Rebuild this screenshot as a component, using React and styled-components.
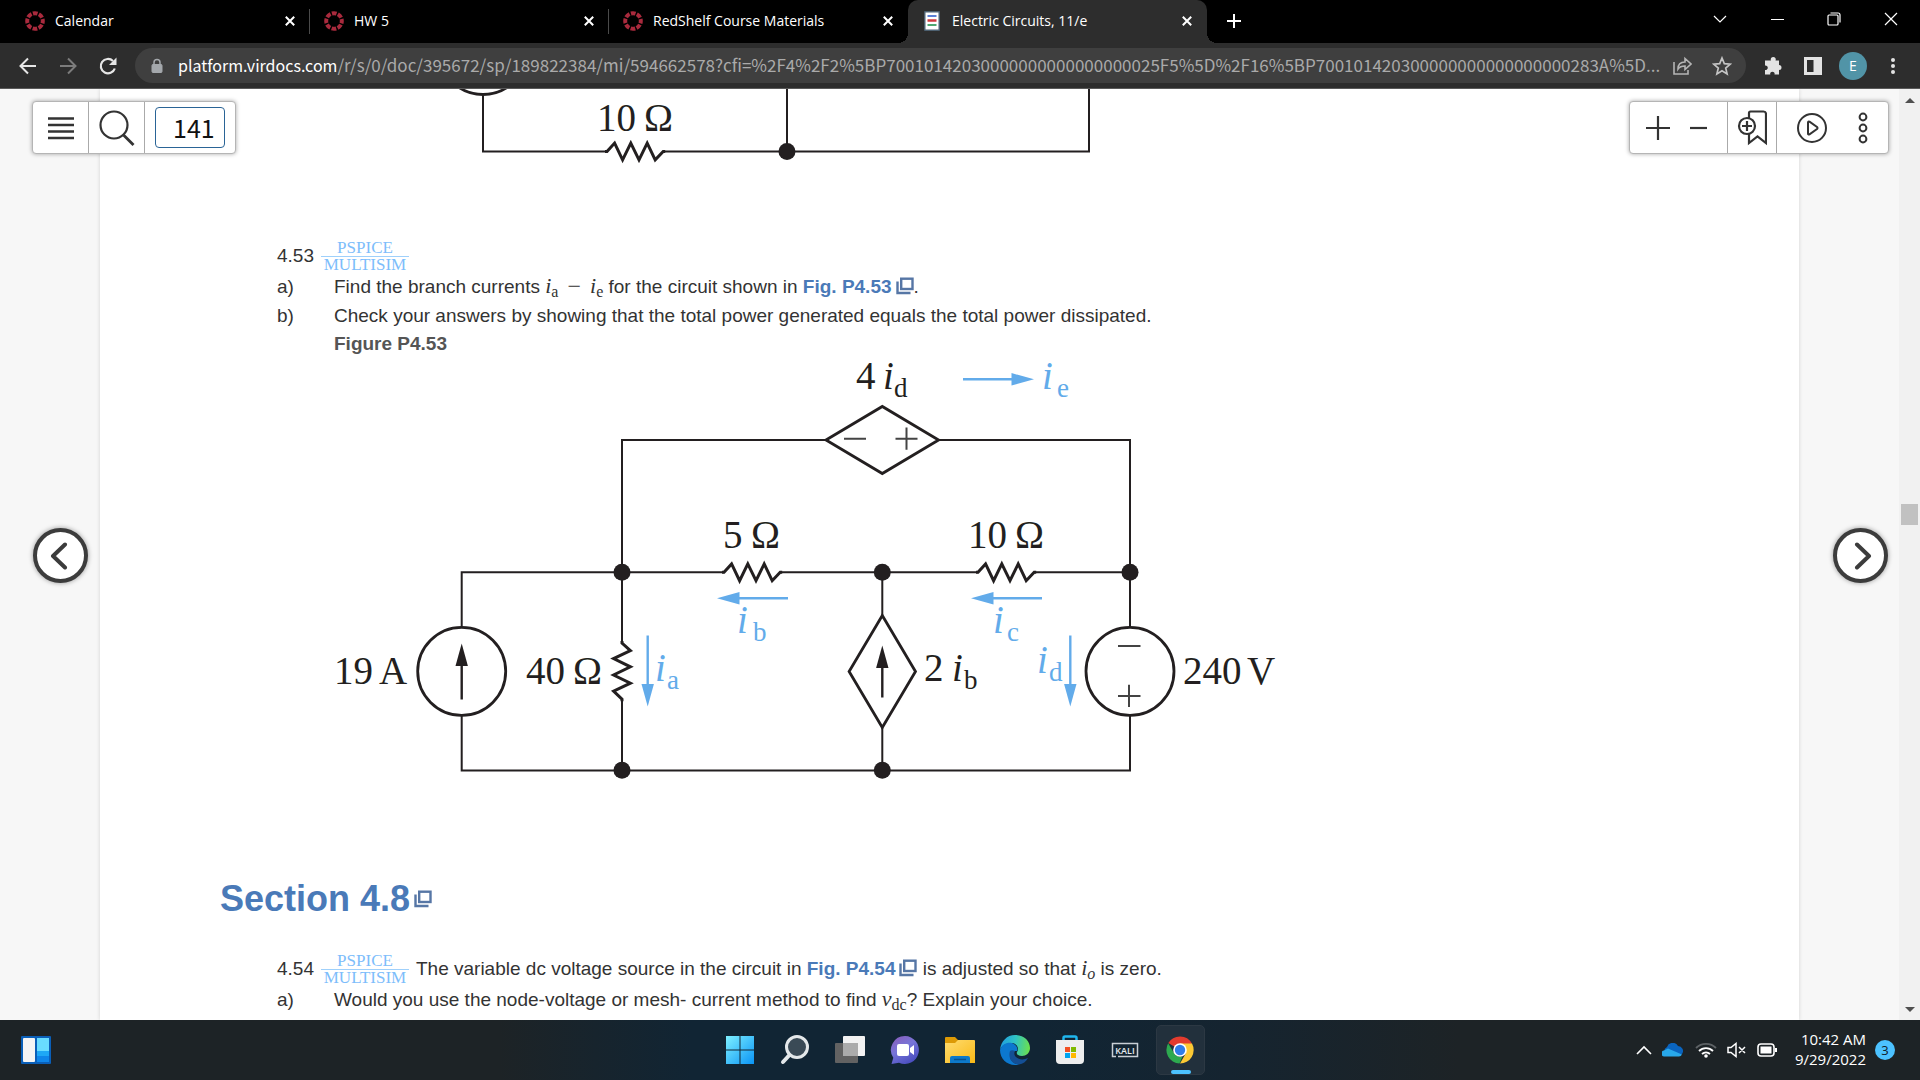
import React from "react";
import styled, { createGlobalStyle, css } from "styled-components";

const uiFont = '"Open Sans", "Noto Sans", sans-serif';
const INK = "#231f20";
const SKY = "#62abea";

const GlobalStyle = createGlobalStyle`
  *, *::before, *::after { box-sizing: border-box; }
  html, body, #root { height: 100%; }
  body { margin: 0; overflow: hidden; font-family: ${uiFont}; }
  button, input { font: inherit; color: inherit; margin: 0; }
  svg { display: block; flex: none; }
`;

const Window = styled.div`
  display: flex;
  flex-direction: column;
  height: 100vh;
  background: #000;
`;

const PlainButton = styled.button`
  display: flex;
  align-items: center;
  justify-content: center;
  padding: 0;
  border: 0;
  background: none;
`;

/* ---------- tab strip ---------- */

const TabStrip = styled.header`
  display: flex;
  flex: none;
  height: 43px;
  padding: 0 1px 0 11px;
  color: #fff;
`;

const Tab = styled.div`
  position: relative;
  display: flex;
  align-items: center;
  width: 299px;
  padding: 0 10px 2px 14px;
  ${(p) =>
    p.$divided &&
    css`
      &::after {
        content: "";
        position: absolute;
        right: 0;
        top: 9px;
        width: 1px;
        height: 25px;
        background: #4a4a4a;
      }
    `}
  ${(p) =>
    p.$active &&
    css`
      background: #2d2d2d;
      border-radius: 10px 10px 0 0;
      &::before,
      &::after {
        content: "";
        position: absolute;
        bottom: 0;
        width: 10px;
        height: 10px;
      }
      &::before {
        left: -10px;
        background: radial-gradient(circle at 0 0, #000 10px, #2d2d2d 10px);
      }
      &::after {
        right: -10px;
        background: radial-gradient(circle at 100% 0, #000 10px, #2d2d2d 10px);
      }
    `}
`;

const TabTitle = styled.button`
  display: flex;
  flex: 1;
  align-items: center;
  gap: 10px;
  padding: 0;
  border: 0;
  background: none;
  font-size: 14px;
  line-height: 20px;
  text-align: left;
`;

const TabClose = styled(PlainButton)`
  width: 20px;
  height: 20px;
`;

const NewTab = styled(PlainButton)`
  width: 36px;
  margin-left: 9px;
  padding-bottom: 2px;
`;

const WindowControls = styled.div`
  display: flex;
  height: 37px;
  margin-left: auto;
`;

const WindowButton = styled(PlainButton)`
  width: 57px;
`;

/* ---------- address row ---------- */

const AddressRow = styled.div`
  display: flex;
  flex: none;
  align-items: center;
  height: 46px;
  padding: 0 7px 0 8px;
  background: #2d2d2d;
  border-bottom: 1px solid #5a5a5a;
`;

const ToolButton = styled(PlainButton)`
  width: 40px;
  height: 36px;
`;

const AddressBar = styled.form`
  display: flex;
  flex: 1;
  align-items: center;
  height: 35px;
  margin: 0 7px;
  padding: 0 4px 0 14px;
  border-radius: 18px;
  background: #3f3f3f;
  font-family: "Noto Sans CJK JP", "Noto Sans", sans-serif;
  font-size: 17px;
  line-height: 24px;
`;

const Host = styled.label`
  margin-left: 13px;
  padding-bottom: 2px;
  color: #fff;
  font-size: 16px;
`;

const PathInput = styled.input`
  flex: 1;
  min-width: 0;
  height: 26px;
  padding: 0 0 2px;
  border: 0;
  outline: 0;
  background: none;
  color: #aaa;
`;

const Avatar = styled.span`
  width: 28px;
  height: 28px;
  border-radius: 50%;
  background: #5194a7;
  color: #fff;
  font-size: 14px;
  line-height: 28px;
  text-align: center;
`;

/* ---------- reader ---------- */

const Reader = styled.main`
  position: relative;
  display: flex;
  flex: 1;
  min-height: 0;
  overflow: hidden;
  background: #f7f7f7;
`;

const Page = styled.article`
  flex: 1;
  margin: 0 100px;
  padding-left: 120px;
  background: #fff;
  box-shadow: 0 0 4px rgba(0, 0, 0, 0.15);
  color: #333;
  font-family: "Liberation Sans", Arial, sans-serif;
  font-size: 19px;
  line-height: 27px;
  white-space: nowrap;
`;

const Figure = styled.figure`
  margin: 0 0 0 114px;
  svg {
    overflow: visible;
  }
`;

const Problem = styled.section`
  padding-left: 57px;
  padding-top: ${(p) => (p.$first ? 74 : 32)}px;
`;

const ProblemHead = styled.div`
  display: flex;
  align-items: center;
  gap: 7px;
  height: 34px;
  padding-bottom: 2px;
`;

const Parts = styled.ol`
  margin: 0;
  padding: 0;
  list-style: none;
`;

const Part = styled.li`
  display: flex;
  height: 29px;
`;

const Marker = styled.span`
  width: 57px;
`;

const Caption = styled.h4`
  margin: 0 0 0 57px;
  padding-bottom: 4px;
  color: #555;
  font-size: 19px;
  line-height: 25px;
`;

const SectionTitle = styled.h2`
  display: flex;
  align-items: center;
  gap: 4px;
  margin: 94px 0 0;
  color: #4a7ab8;
  font-size: 36px;
  line-height: 42px;
`;

const Fraction = styled.span`
  display: flex;
  flex-direction: column;
  width: 88px;
  margin-top: 2px;
  color: #7dbdfb;
  font-family: "Liberation Serif", "Times New Roman", serif;
  font-size: 17px;
  line-height: 17px;
  text-align: center;
`;

const Denominator = styled.span`
  border-top: 1px solid #9fd0fb;
  line-height: 16px;
`;

const Variable = styled.i`
  font-family: "Liberation Serif", "Times New Roman", serif;
  font-size: 22px;
  line-height: 20px;
`;

const Operator = styled.span`
  margin: 0 9px;
  font-family: "Liberation Serif", "Times New Roman", serif;
  font-size: 24px;
  line-height: 20px;
  vertical-align: -1px;
`;

const Sub = styled.sub`
  font-family: "Liberation Serif", "Times New Roman", serif;
  font-size: 16px;
  font-style: ${(p) => (p.$italic ? "italic" : "normal")};
  line-height: 0;
  vertical-align: -4px;
`;

const RefLink = styled.a`
  color: #4a7ab8;
  font-weight: bold;
  text-decoration: none;
  svg {
    display: inline-block;
    margin-left: 4px;
    vertical-align: -2px;
  }
`;

const Panel = styled.div`
  position: absolute;
  top: 12px;
  ${(p) => (p.$side === "left" ? "left: 32px;" : "right: 31px; padding-right: 9px;")}
  display: flex;
  height: 53px;
  border: 1px solid #b5b5b5;
  border-radius: 4px;
  background: #fff;
  box-shadow: 0 0 4px rgba(0, 0, 0, 0.35);
`;

const PanelButton = styled(PlainButton)`
  width: ${(p) => p.$width}px;
  border-right: ${(p) => (p.$ruled ? "1px solid #aaa" : "0")};
`;

const PageNumber = styled.input`
  width: 70px;
  height: 41px;
  margin: 5px 10px;
  padding: 0 0 2px 17px;
  border: 1px solid #2a6496;
  border-radius: 4px;
  background: #fff;
  color: #111;
  font-family: "Noto Sans CJK JP", "Noto Sans", sans-serif;
  font-size: 25px;
`;

const PageTurn = styled(PlainButton)`
  position: absolute;
  top: 439px;
  ${(p) => (p.$side === "left" ? "left: 33px;" : "right: 32px;")}
  width: 55px;
  height: 55px;
  border: 4px solid #3c3c3c;
  border-radius: 50%;
  background: #fff;
  box-shadow: 0 0 5px rgba(0, 0, 0, 0.4);
`;

const ScrollBar = styled.div`
  display: flex;
  flex: none;
  flex-direction: column;
  align-items: center;
  width: 21px;
  padding: 9px 0 8px;
  background: #f1f1f1;
`;

const ScrollThumb = styled.div`
  width: 17px;
  height: 21px;
  margin: 401px 0 auto;
  background: #c1c1c1;
`;

/* ---------- taskbar ---------- */

const Taskbar = styled.footer`
  display: grid;
  grid-template-columns: 1fr auto 1fr;
  flex: none;
  align-items: center;
  height: 60px;
  background: linear-gradient(90deg, #1d2326 0%, #1d2326 26%, #112534 36%, #112534 54%, #152430 64%, #1d2326 76%);
  color: #fff;
`;

const Widgets = styled(PlainButton)`
  width: 30px;
  margin-left: 21px;
`;

const Apps = styled.nav`
  display: flex;
`;

const AppButton = styled(PlainButton)`
  position: relative;
  width: 55px;
  height: 50px;
  ${(p) =>
    p.$running &&
    css`
      &::before {
        content: "";
        position: absolute;
        inset: 0 3px;
        border: 1px solid #2c3843;
        border-radius: 5px;
        background: #22303c;
      }
      &::after {
        content: "";
        position: absolute;
        left: 18px;
        bottom: 1px;
        width: 20px;
        height: 4px;
        border-radius: 2px;
        background: #4cc2ff;
      }
      svg {
        position: relative;
      }
    `}
`;

const Tray = styled.div`
  display: flex;
  align-items: center;
  justify-content: flex-end;
  padding-right: 25px;
`;

const TrayIcons = styled.div`
  display: flex;
  align-items: center;
  gap: 10px;
  margin-right: 17px;
`;

const Clock = styled.time`
  padding-bottom: 2px;
  font-size: 15px;
  line-height: 20px;
  text-align: right;
`;

const Badge = styled.span`
  width: 20px;
  height: 20px;
  margin-left: 9px;
  border-radius: 50%;
  background: #4cc2ff;
  color: #10202a;
  font-size: 13px;
  line-height: 20px;
  text-align: center;
`;

/* ---------- icons ---------- */

const Icon = ({ size = 20, w, h, box, color = "currentColor", weight = 2, children, fill = "none" }) => (
  <svg
    width={w || size}
    height={h || size}
    viewBox={box || `0 0 ${w || size} ${h || size}`}
    fill={fill}
    stroke={color}
    strokeWidth={weight}
    aria-hidden="true"
  >
    {children}
  </svg>
);

const CourseIcon = () => (
  <Icon size={20} color="#a92a3d" weight={4}>
    <circle cx="10" cy="10" r="7.8" strokeDasharray="4.7 1.426" strokeDashoffset="2.35" />
  </Icon>
);

const BookIcon = () => (
  <Icon size={20} color="none">
    <rect x="2" y="0" width="16" height="20" rx="1" fill="#4d6070" />
    <rect x="3.500" y="1.500" width="13" height="17" fill="#fff" />
    <path d="M5.500 5h9" stroke="#5c80d6" strokeWidth="2" />
    <path d="M5.500 9.500h9" stroke="#d0393e" strokeWidth="2.500" />
    <path d="M5.500 14h9" stroke="#4fa871" strokeWidth="2" />
  </Icon>
);

const CloseIcon = () => (
  <Icon size={12}>
    <path d="M1.800 1.800l8.400 8.400M10.200 1.800l-8.400 8.400" />
  </Icon>
);

const PopoutIcon = () => (
  <Icon size={18} color="#5676a5" weight={2.4}>
    <rect x="5.200" y="1.700" width="11.300" height="10.300" />
    <path d="M1.500 4.500V16h13" />
  </Icon>
);

const Cap = ({ down }) => (
  <svg width="14" height="5" viewBox="0 0 14 5" aria-hidden="true">
    <path d={down ? "M2 0h10L7 5z" : "M2 5h10L7 0z"} fill="#505050" />
  </svg>
);

/* ---------- circuit drawing ---------- */

const Big = styled.text`
  font-family: "Liberation Serif", "Times New Roman", serif;
  font-size: 39px;
  font-style: ${(p) => (p.$italic ? "italic" : "normal")};
  fill: ${(p) => (p.$sky ? SKY : INK)};
`;

const Small = styled.text`
  font-family: "Liberation Serif", "Times New Roman", serif;
  font-size: 27px;
  fill: ${(p) => (p.$sky ? SKY : INK)};
`;

const Node = ({ x, y }) => <circle cx={x} cy={y} r="8.500" fill={INK} />;

const Resistor = ({ x, y, turn = 0 }) => (
  <path
    transform={`translate(${x} ${y}) rotate(${turn})`}
    d="M0 0h2l7.600-8.400 8 16.800 8.200-16.800 8.200 16.800 8.200-16.800 8 16.800 8-8.400h2"
    fill="none"
    stroke={INK}
    strokeWidth="3"
  />
);

const Arrow = ({ x, y, turn = 0, color = SKY, length = 71 }) => (
  <g transform={`translate(${x} ${y}) rotate(${turn})`}>
    <path d={`M0 0H${length - 20}`} stroke={color} strokeWidth="2.400" />
    <path d={`M${length} 0l-22.500-6.200v12.400z`} fill={color} />
  </g>
);

const UpperCircuit = () => (
  <svg width="800" height="76" viewBox="334 89 800 76" role="img" aria-label="Circuit with a 10 ohm resistor">
    <g fill="none" stroke={INK} strokeWidth="2">
      <circle cx="483" cy="50.500" r="44" strokeWidth="2.800" />
      <path d="M483 95v56.500h124M664 151.500h425V89M787 89v62" />
    </g>
    <Resistor x={605} y={151.5} />
    <Node x={787} y={151.5} />
    <Big x="597" y="131">10</Big>
    <Big x="644" y="131">Ω</Big>
  </svg>
);

const MainCircuit = () => (
  <svg width="960" height="424" viewBox="334 360 960 424" role="img" aria-label="Figure P4.53 circuit">
    <g fill="none" stroke={INK} strokeWidth="2">
      <path d="M826 440H622v203M939 440h191v187M461.700 627v-54.700H724M780 572.300h198M1034 572.300h96M622 699v71.500M461.700 716v54.500H1130V716M882.300 572.300V615M882.300 728v42.500" />
      <path d="M844 438.700h22M895.500 438.700h22M906.500 427.500v22.200M1118 646h22.500M1118 696h22.500M1129 684.700V707" stroke="#444" />
      <g strokeWidth="2.800">
        <path d="M826 440l56.300-33.500L938.600 440l-56.300 33.500z" />
        <path d="M882.300 615.500l33.200 56-33.200 56-33.200-56z" />
        <circle cx="461.700" cy="671.300" r="44" />
        <circle cx="1130" cy="671.300" r="44" />
      </g>
    </g>
    <Resistor x={722} y={572.3} />
    <Resistor x={976} y={572.3} />
    <Resistor x={622} y={641} turn={90} />
    <Node x={622} y={572.3} />
    <Node x={882.3} y={572.3} />
    <Node x={1130} y={572.3} />
    <Node x={622} y={770.3} />
    <Node x={882.3} y={770.3} />
    <Arrow x={461.7} y={699.5} turn={-90} color={INK} length={56} />
    <Arrow x={882.3} y={697.5} turn={-90} color={INK} length={52} />
    <Arrow x={963} y={379.3} />
    <Arrow x={788} y={598.3} turn={180} />
    <Arrow x={1042} y={598.3} turn={180} />
    <Arrow x={647.7} y={635.5} turn={90} />
    <Arrow x={1070.3} y={635.5} turn={90} />
    <Big x="856" y="388.500">4</Big>
    <Big $italic x="883" y="388.500">i</Big>
    <Small x="894" y="396.500">d</Small>
    <Big $italic $sky x="1042" y="388.500">i</Big>
    <Small $sky x="1057" y="396.500">e</Small>
    <Big x="723" y="547.700">5</Big>
    <Big x="751" y="547.700">Ω</Big>
    <Big x="968" y="547.700">10</Big>
    <Big x="1015" y="547.700">Ω</Big>
    <Big $italic $sky x="737" y="632.700">i</Big>
    <Small $sky x="753" y="640.500">b</Small>
    <Big $italic $sky x="993" y="632.700">i</Big>
    <Small $sky x="1007" y="640.500">c</Small>
    <Big x="334" y="684">19</Big>
    <Big x="379" y="684">A</Big>
    <Big x="526" y="684">40</Big>
    <Big x="573" y="684">Ω</Big>
    <Big $italic $sky x="655" y="680.700">i</Big>
    <Small $sky x="667" y="688.500">a</Small>
    <Big x="924" y="680.700">2</Big>
    <Big $italic x="952" y="680.700">i</Big>
    <Small x="964" y="688.500">b</Small>
    <Big $italic $sky x="1037" y="672.500">i</Big>
    <Small $sky x="1049" y="680.500">d</Small>
    <Big x="1183" y="684">240</Big>
    <Big x="1247" y="684">V</Big>
  </svg>
);

const tabs = [
  { title: "Calendar", icon: <CourseIcon />, divided: true },
  { title: "HW 5", icon: <CourseIcon />, divided: true },
  { title: "RedShelf Course Materials", icon: <CourseIcon /> },
  { title: "Electric Circuits, 11/e", icon: <BookIcon />, active: true },
];

const PspiceMultisim = () => (
  <Fraction>
    <span>PSPICE</span>
    <Denominator>MULTISIM</Denominator>
  </Fraction>
);

const apps = [
  {
    name: "Start",
    icon: (
      <Icon size={30} color="none">
        <defs>
          <linearGradient id="win" x1="0" y1="0" x2="1" y2="1">
            <stop offset="0" stopColor="#7ef0ff" />
            <stop offset="1" stopColor="#0a94f5" />
          </linearGradient>
        </defs>
        <path d="M1 1h13.500v13.500H1zM15.500 1H29v13.500H15.500zM1 15.500h13.500V29H1zM15.500 15.500H29V29H15.500z" fill="url(#win)" />
      </Icon>
    ),
  },
  {
    name: "Search",
    icon: (
      <Icon size={30} color="#e4e8ea" weight={3}>
        <circle cx="17" cy="12" r="10.500" fill="#3a4a56" />
        <path d="M9.500 20l-6.500 7" strokeWidth="4" strokeLinecap="round" />
      </Icon>
    ),
  },
  {
    name: "Task view",
    icon: (
      <Icon size={32} color="none">
        <rect x="9" y="2" width="22" height="20" rx="1" fill="#f2f2f2" />
        <rect x="1" y="9" width="23" height="20" rx="1" fill="#626262" />
        <rect x="9" y="9" width="15" height="13" fill="#ababab" />
      </Icon>
    ),
  },
  {
    name: "Chat",
    icon: (
      <Icon size={30} color="none">
        <defs>
          <linearGradient id="chat" x1="0" y1="0" x2="0.600" y2="1">
            <stop offset="0" stopColor="#8d5ab8" />
            <stop offset="0.500" stopColor="#7775d8" />
            <stop offset="1" stopColor="#4b4fc0" />
          </linearGradient>
        </defs>
        <path d="M15 1a14 14 0 1 1-6 26.700L1.500 29l1.800-6.200A14 14 0 0 1 15 1z" fill="url(#chat)" />
        <rect x="7" y="9" width="12" height="12" rx="2" fill="#fff" />
        <path d="M20 13l4-3v10l-4-3z" fill="#fff" />
      </Icon>
    ),
  },
  {
    name: "File Explorer",
    icon: (
      <Icon w={30} h={28} color="none">
        <defs>
          <linearGradient id="folder" x1="0" y1="0" x2="1" y2="1">
            <stop offset="0" stopColor="#ffdc70" />
            <stop offset="1" stopColor="#f9b916" />
          </linearGradient>
        </defs>
        <path d="M0 2q0-1 1-1h9l3 3h8v8H0z" fill="#dd9a05" />
        <path d="M0 7h10l3-3h16q1 0 1 1v22H0z" fill="url(#folder)" />
        <path d="M5 27v-5q0-2 2-2h16q2 0 2 2v5z" fill="#0d79ca" />
        <path d="M9 23.500h12" stroke="#08508f" strokeWidth="1.500" />
      </Icon>
    ),
  },
  {
    name: "Edge",
    icon: (
      <Icon size={30} color="none">
        <defs>
          <linearGradient id="edgeTop" x1="0" y1="0.300" x2="1" y2="0.400">
            <stop offset="0" stopColor="#1f9de2" />
            <stop offset="0.500" stopColor="#2fc3c4" />
            <stop offset="1" stopColor="#6be04f" />
          </linearGradient>
        </defs>
        <path d="M0 15C1 6 7 0 15 0c9 0 15 6 15 13 0 5-4 8-8 8-4 0-6-2-5-4 2-3 1-8-5-9C6 8 2 10 0 15z" fill="url(#edgeTop)" />
        <path d="M0 15C2 8 10 6 14 9c3 2 4 5 3 7-7-1-9 7-4 11 2 2 4 2 6 2.400C9 32 0 25 0 15z" fill="#0c78cf" />
        <path d="M10 16c-2 6 1 13 9 13.500 4-.5 7-3 9-6.500-4 2-9 2-12-1-2-2-2-4-1-6-2-1-4-1-5 0z" fill="#144f94" />
      </Icon>
    ),
  },
  {
    name: "Microsoft Store",
    icon: (
      <Icon size={30} color="none">
        <path d="M8.500 6V3q0-1.500 1.500-1.500h10q1.500 0 1.500 1.500v3" fill="none" stroke="#1fb6ee" strokeWidth="2.500" />
        <path d="M1 5h28v20q0 4-4 4H5q-4 0-4-4z" fill="#eeeeee" />
        <path d="M10 12h5v5h-5z" fill="#f25022" />
        <path d="M16 12h5v5h-5z" fill="#7fba00" />
        <path d="M10 18h5v5h-5z" fill="#00a4ef" />
        <path d="M16 18h5v5h-5z" fill="#ffb900" />
      </Icon>
    ),
  },
  {
    name: "Kali",
    icon: (
      <Icon w={28} h={16} weight={1.5} color="#c9d0d6">
        <path d="M5 14.500H1.500v-13h25v13H7" />
        <text x="14" y="12" textAnchor="middle" fontSize="9" fontWeight="600" fontFamily="Open Sans" fill="#e8ecef" stroke="none">
          KALI
        </text>
      </Icon>
    ),
  },
  {
    name: "Chrome",
    running: true,
    icon: (
      <Icon size={28} color="none">
        <path d="M14 14L2.300 7A13.600 13.600 0 0 1 25.900 7.500z" fill="#e33b2e" />
        <path d="M14 7.500h12A13.600 13.600 0 0 1 14 27.600L20 17z" fill="#fcc934" />
        <path d="M2.200 7.200L8.500 18q3 4 8 2.500L13.500 27.600A13.600 13.600 0 0 1 2.200 7.200z" fill="#2da94f" />
        <circle cx="14" cy="14" r="6.800" fill="#fff" />
        <circle cx="14" cy="14" r="5.200" fill="#2f7de9" />
      </Icon>
    ),
  },
];

const addressPath =
  "/r/s/0/doc/395672/sp/189822384/mi/594662578?cfi=%2F4%2F2%5BP700101420300000000000000000" +
  "25F5%5D%2F16%5BP700101420300000000000000000" +
  "283A%5D...";

export default function App() {
  return (
    <Window>
      <GlobalStyle />
      <TabStrip>
        {tabs.map((tab) => (
          <Tab key={tab.title} $active={tab.active} $divided={tab.divided}>
            <TabTitle type="button">
              {tab.icon}
              {tab.title}
            </TabTitle>
            <TabClose type="button" aria-label={`Close ${tab.title}`}>
              <CloseIcon />
            </TabClose>
          </Tab>
        ))}
        <NewTab type="button" aria-label="New tab">
          <Icon size={16}>
            <path d="M8 1v14M1 8h14" />
          </Icon>
        </NewTab>
        <WindowControls>
          <WindowButton type="button" aria-label="Search tabs">
            <Icon w={14} h={8} weight={1.2}>
              <path d="M1 1l6 6 6-6" />
            </Icon>
          </WindowButton>
          <WindowButton type="button" aria-label="Minimize">
            <Icon size={14} weight={1}>
              <path d="M1 7.500h13" />
            </Icon>
          </WindowButton>
          <WindowButton type="button" aria-label="Restore">
            <Icon size={14} weight={1.2}>
              <rect x="1" y="3" width="10" height="10" rx="1" />
              <path d="M3.500 1H11q2 0 2 2v7.500" />
            </Icon>
          </WindowButton>
          <WindowButton type="button" aria-label="Close window">
            <Icon size={14} weight={1.2}>
              <path d="M1 1l12 12M13 1L1 13" />
            </Icon>
          </WindowButton>
        </WindowControls>
      </TabStrip>

      <AddressRow>
        <ToolButton type="button" aria-label="Back">
          <Icon color="#e6e6e6">
            <path d="M18 10H3M10 2.500L2.500 10l7.500 7.500" />
          </Icon>
        </ToolButton>
        <ToolButton type="button" aria-label="Forward">
          <Icon color="#7c7c7c">
            <path d="M2 10h15M10 2.500l7.500 7.500-7.500 7.500" />
          </Icon>
        </ToolButton>
        <ToolButton type="button" aria-label="Reload">
          <Icon color="#e6e6e6" weight={2.2}>
            <path d="M16.800 12.500A7.200 7.200 0 1 1 15 5" />
            <path d="M18.500 1.500v7.500H11z" fill="#e6e6e6" stroke="none" />
          </Icon>
        </ToolButton>
        <AddressBar onSubmit={(e) => e.preventDefault()}>
          <Icon w={16} h={16} color="#a4a8ac">
            <rect x="3" y="6.500" width="10" height="8" rx="1" fill="#a4a8ac" strokeWidth="1" />
            <path d="M5 7V4.500a3 3 0 0 1 6 0V7" strokeWidth="1.500" />
          </Icon>
          <Host htmlFor="address">platform.virdocs.com</Host>
          <PathInput id="address" readOnly value={addressPath} />
          <ToolButton type="button" aria-label="Share">
            <Icon color="#b5b5b5" weight={1.6}>
              <path d="M2 6v12h14v-4M6 13c0-5 3-7 7-7V2.500l6 5.500-6 5.500V10c-3 0-5 0-7 3z" />
            </Icon>
          </ToolButton>
          <ToolButton type="button" aria-label="Bookmark this tab">
            <Icon color="#c4c4c4" weight={1.7}>
              <path d="M10 2l2.300 5.600 6 .5-4.600 3.900 1.400 5.900L10 14.700l-5.100 3.200L6.300 12 1.700 8.100l6-.5z" />
            </Icon>
          </ToolButton>
        </AddressBar>
        <ToolButton type="button" aria-label="Extensions">
          <Icon color="none">
            <path d="M4 4.500h4a2.500 2.500 0 1 1 4.500 0H16V9a2.500 2.500 0 1 1 0 5v4.500h-4.500a2.200 2.200 0 1 0-4.200 0H2V14a2.300 2.300 0 1 0 0-4.500V4.500z" fill="#e3e3e3" />
          </Icon>
        </ToolButton>
        <ToolButton type="button" aria-label="Side panel">
          <Icon color="#e3e3e3" weight={3}>
            <rect x="2.500" y="2.500" width="15" height="15" />
            <path d="M14 2v16" strokeWidth="7" />
          </Icon>
        </ToolButton>
        <ToolButton type="button" aria-label="Profile">
          <Avatar>E</Avatar>
        </ToolButton>
        <ToolButton type="button" aria-label="Menu">
          <Icon color="none" fill="#e3e3e3">
            <circle cx="10" cy="4" r="2" />
            <circle cx="10" cy="10" r="2" />
            <circle cx="10" cy="16" r="2" />
          </Icon>
        </ToolButton>
      </AddressRow>

      <Reader>
        <Page>
          <Figure>
            <UpperCircuit />
          </Figure>
          <Problem $first>
            <ProblemHead>
              <span>4.53</span>
              <PspiceMultisim />
            </ProblemHead>
            <Parts>
              <Part>
                <Marker>a)</Marker>
                <span>
                  Find the branch currents <Variable>i</Variable>
                  <Sub>a</Sub>
                  <Operator>−</Operator>
                  <Variable>i</Variable>
                  <Sub>e</Sub> for the circuit shown in{" "}
                  <RefLink href="#fig-p4-53">
                    Fig. P4.53
                    <PopoutIcon />
                  </RefLink>
                  .
                </span>
              </Part>
              <Part>
                <Marker>b)</Marker>
                <span>Check your answers by showing that the total power generated equals the total power dissipated.</span>
              </Part>
            </Parts>
            <Caption>Figure P4.53</Caption>
          </Problem>
          <Figure id="fig-p4-53">
            <MainCircuit />
          </Figure>
          <SectionTitle>
            Section 4.8
            <PopoutIcon />
          </SectionTitle>
          <Problem>
            <ProblemHead>
              <span>4.54</span>
              <PspiceMultisim />
              <span>
                The variable dc voltage source in the circuit in{" "}
                <RefLink href="#fig-p4-54">
                  Fig. P4.54
                  <PopoutIcon />
                </RefLink>{" "}
                is adjusted so that <Variable>i</Variable>
                <Sub $italic>o</Sub> is zero.
              </span>
            </ProblemHead>
            <Parts>
              <Part>
                <Marker>a)</Marker>
                <span>
                  Would you use the node-voltage or mesh- current method to find <Variable>v</Variable>
                  <Sub>dc</Sub>? Explain your choice.
                </span>
              </Part>
            </Parts>
          </Problem>
        </Page>
        <ScrollBar>
          <Cap />
          <ScrollThumb />
          <Cap down />
        </ScrollBar>

        <Panel $side="left">
          <PanelButton type="button" $width={56} $ruled aria-label="Contents">
            <Icon w={26} h={24} color="#333" weight={2.4}>
              <path d="M0 2.500h26M0 9h26M0 15.500h26M0 22h26" />
            </Icon>
          </PanelButton>
          <PanelButton type="button" $width={56} $ruled aria-label="Search book">
            <Icon size={36} color="#333" weight={2.2}>
              <circle cx="15" cy="15" r="13.500" />
              <path d="M24.500 25l10 10" strokeWidth="2.800" />
            </Icon>
          </PanelButton>
          <PageNumber aria-label="Page number" defaultValue="141" />
        </Panel>

        <Panel $side="right">
          <PanelButton type="button" $width={55} aria-label="Zoom in">
            <Icon size={24} color="#333" weight={2.2}>
              <path d="M12 0v24M0 12h24" />
            </Icon>
          </PanelButton>
          <PanelButton type="button" $width={43} $ruled aria-label="Zoom out">
            <Icon w={32} h={24} color="#333" weight={2.2}>
              <path d="M0 12h17" />
            </Icon>
          </PanelButton>
          <PanelButton type="button" $width={49} $ruled aria-label="Add bookmark">
            <Icon w={30} h={36} color="#333" weight={2.2}>
              <path d="M12 8V3q0-1.500 1.500-1.500h13Q29 1.500 29 4v29l-8.500-6.500L12 33V24" />
              <circle cx="10" cy="16" r="8" />
              <path d="M10 11v10M5 16h10" />
            </Icon>
          </PanelButton>
          <PanelButton type="button" $width={70} aria-label="Read aloud">
            <Icon size={32} color="#333" weight={2}>
              <circle cx="16" cy="16" r="14" />
              <path d="M12 10.500v11q0 1.500 1.500.800l7.500-5.300q1-1 0-2l-7.500-5.300q-1.500-.7-1.500.800z" />
            </Icon>
          </PanelButton>
          <PanelButton type="button" $width={32} aria-label="More options">
            <Icon w={12} h={32} color="#333" weight={2}>
              <circle cx="6" cy="5" r="3.400" />
              <circle cx="6" cy="16" r="3.400" />
              <circle cx="6" cy="27" r="3.400" />
            </Icon>
          </PanelButton>
        </Panel>

        <PageTurn type="button" $side="left" aria-label="Previous page">
          <Icon size={28} color="#3c3c3c" weight={4}>
            <path d="M18 2.500L6 14l12 11.500" strokeLinecap="round" strokeLinejoin="round" />
          </Icon>
        </PageTurn>
        <PageTurn type="button" $side="right" aria-label="Next page">
          <Icon size={28} color="#3c3c3c" weight={4}>
            <path d="M10 2.500L22 14 10 25.500" strokeLinecap="round" strokeLinejoin="round" />
          </Icon>
        </PageTurn>
      </Reader>

      <Taskbar>
        <Widgets type="button" aria-label="Widgets">
          <Icon w={30} h={28} color="none">
            <rect width="30" height="28" rx="1" fill="#0a5fb8" />
            <rect x="2" y="2" width="12" height="24" rx="1" fill="#f4f4f4" />
            <rect x="16" y="2" width="12" height="13" fill="#69dcff" />
            <rect x="16" y="15" width="12" height="5" fill="#1ea8f6" />
            <rect x="16" y="20" width="12" height="6" fill="#0f86ea" />
          </Icon>
        </Widgets>
        <Apps aria-label="Applications">
          {apps.map((app) => (
            <AppButton key={app.name} type="button" $running={app.running} aria-label={app.name}>
              {app.icon}
            </AppButton>
          ))}
        </Apps>
        <Tray>
          <TrayIcons>
            <Icon w={16} h={10} weight={1.6}>
              <path d="M1 9l7-7 7 7" />
            </Icon>
            <Icon w={21} h={14} color="none">
              <path d="M5 13a5 5 0 0 1 0-9 6 6 0 0 1 11-1 5 5 0 0 1 4 8z" fill="#0a64bf" />
              <path d="M3 13.500a3 3 0 0 1-1-6l4-2 14 6q-1 2-3 2z" fill="#28a8ea" />
            </Icon>
            <Icon w={24} h={16} weight={1.8}>
              <path d="M3 6a14 14 0 0 1 20 0" stroke="#5d6265" />
              <path d="M6 9a10 10 0 0 1 14 0M9 12a6 6 0 0 1 8 0" />
              <circle cx="13" cy="14" r="1.800" fill="#fff" stroke="none" />
            </Icon>
            <Icon w={20} h={16} weight={1.5}>
              <path d="M1 5.500h3L9 1.500v13l-5-4H1zM12 5l6 6M18 5l-6 6" />
            </Icon>
            <Icon w={21} h={14} weight={1.6}>
              <rect x="1" y="1" width="16" height="12" rx="3" />
              <rect x="4" y="4" width="10" height="6" fill="#fff" stroke="#fff" strokeWidth="1" />
              <path d="M19 5v4" strokeWidth="2" />
            </Icon>
          </TrayIcons>
          <Clock dateTime="2022-09-29T10:42">
            10:42 AM
            <br />
            9/29/2022
          </Clock>
          <Badge>3</Badge>
        </Tray>
      </Taskbar>
    </Window>
  );
}
